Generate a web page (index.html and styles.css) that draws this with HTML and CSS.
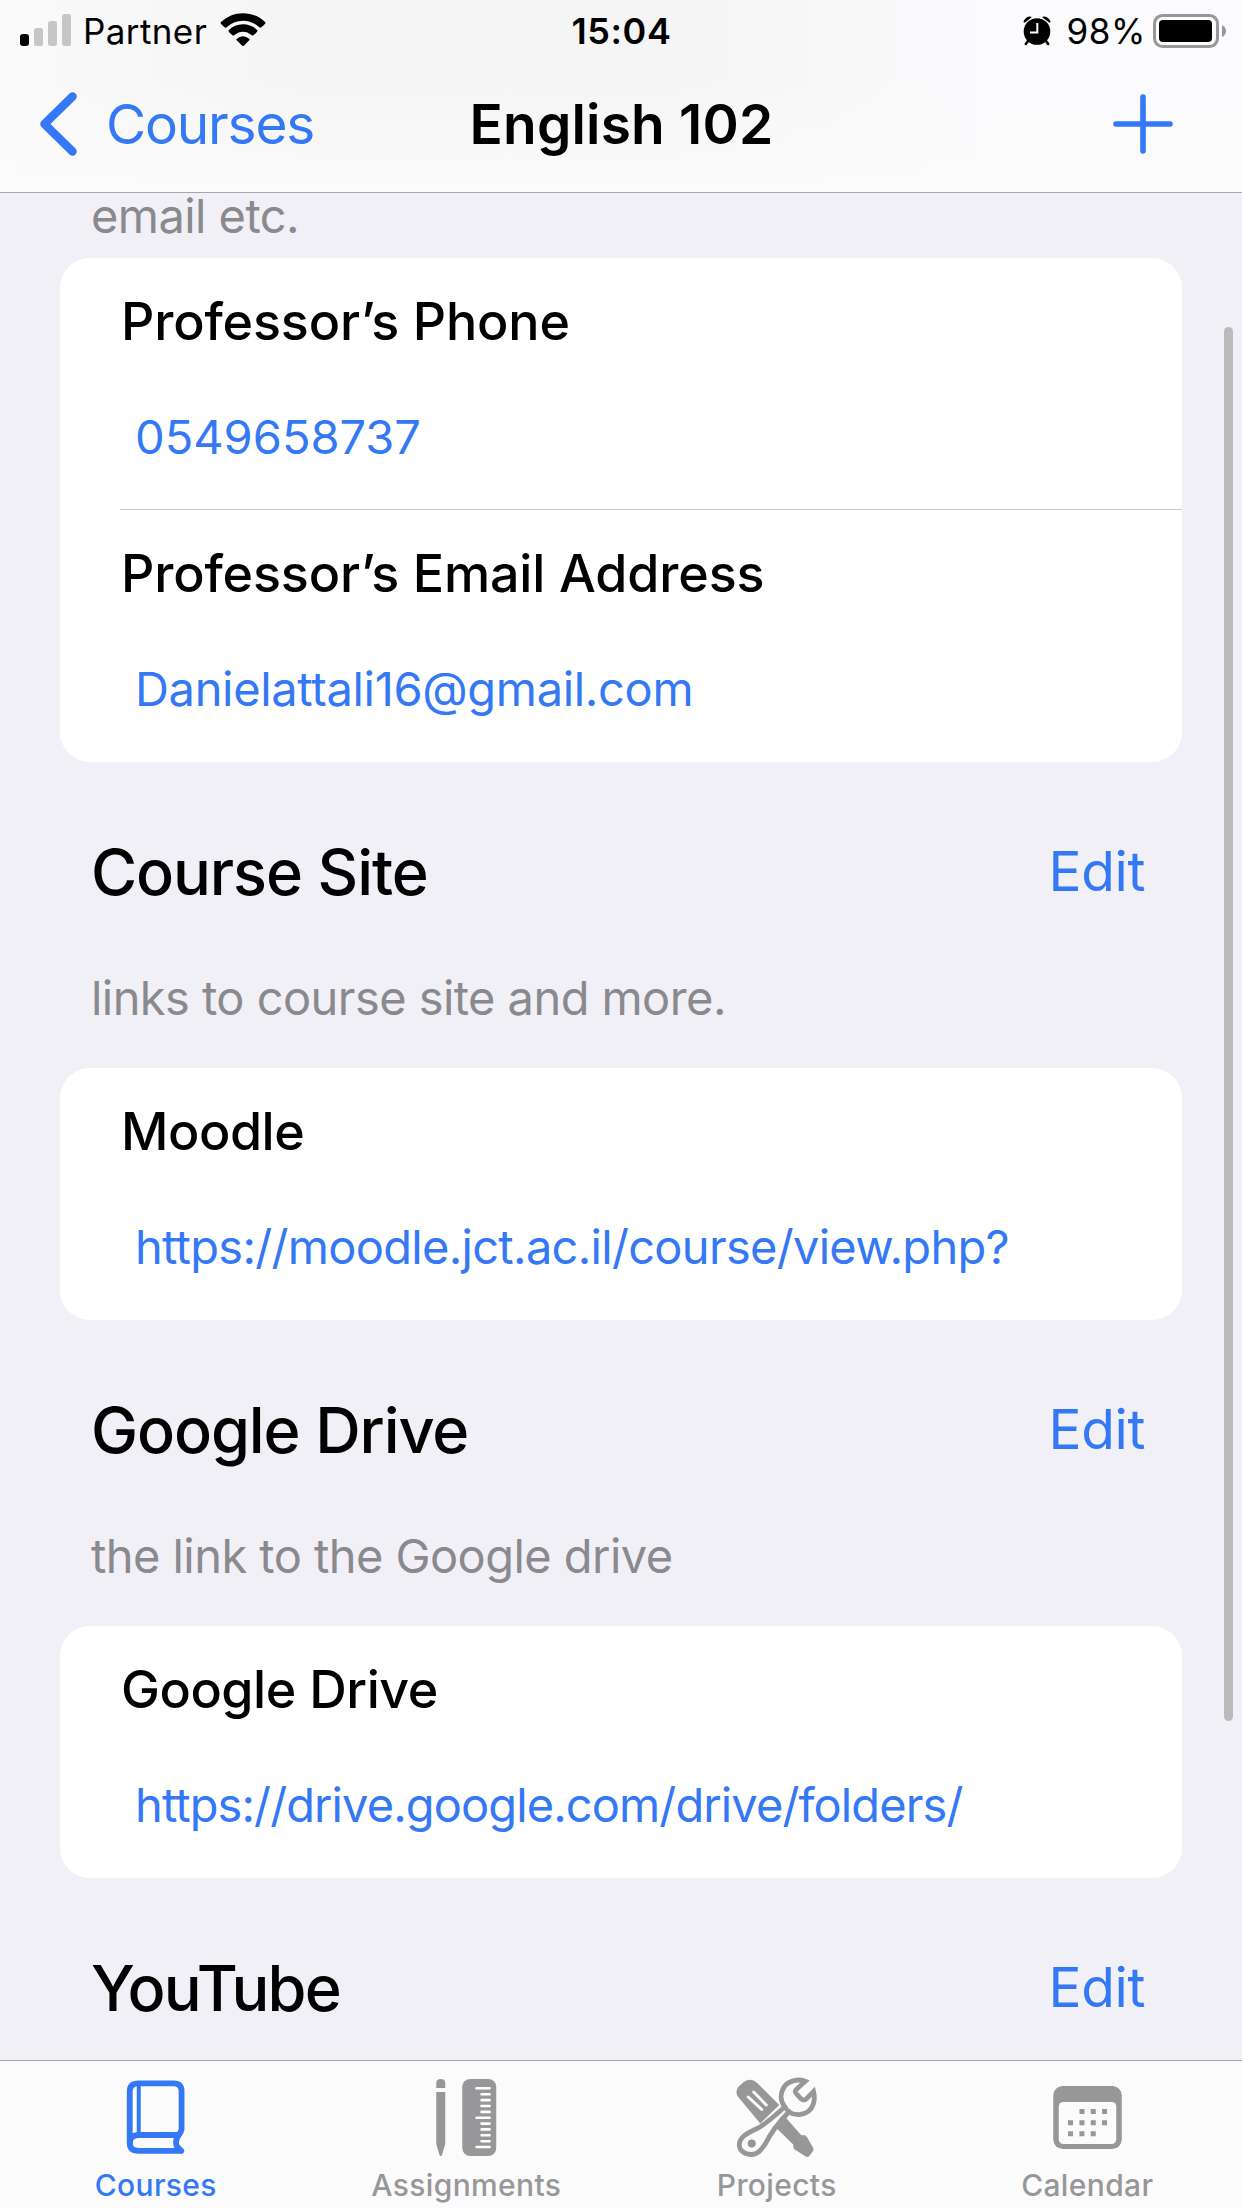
FILE: index.html
```html
<!DOCTYPE html>
<html lang="en">
<head>
<meta charset="utf-8">
<title>English 102</title>
<link rel="stylesheet" href="styles.css">
</head>
<body>
<div class="screen">
  <header class="top">
    <div class="status">
      <div class="status-left">
        <svg class="signal" width="51" height="32" viewBox="0 0 51 32"><rect y="20" width="9" height="12" rx="3"/><g fill="#c6c6c7"><rect x="14" y="14" width="9" height="18" rx="2.5"/><rect x="28" y="7" width="9" height="25" rx="2.5"/><rect x="42" width="9" height="32" rx="2.5"/></g></svg>
        <span class="carrier">Partner</span>
        <svg class="wifi" width="46" height="34" viewBox="0 0 46 34"><path d="M.5 9.500C13-3 33-3 45.500 9.500Q45.500 11 41 14.500Q40 15 39 14C30 5.500 16 5.500 7 14Q6 15 5 14.500Q.5 11 .5 9.500ZM8.400 17.500C16 9.300 30 9.300 37.600 17.500Q37.500 19 33.500 22.300Q32.500 23 31.500 22C26.500 17.500 19.500 17.500 14.500 22Q13.500 23 12.500 22.300Q8.500 19 8.400 17.500ZM16.500 26Q23 20.500 29.500 26Q30 27 28.500 28L24 32.500Q23 33.500 22 32.500L17.500 28Q16 27 16.500 26Z"/></svg>
      </div>
      <span class="clock">15:04</span>
      <div class="status-right">
        <svg class="alarm" width="28" height="30" viewBox="0 0 28 30"><circle cx="14" cy="15.5" r="13.3"/><path d="M.8 6.500Q0 4.500 2.500 2.500Q5-.5 8.300.8L8.500 1.500 2 6.500ZM27.200 6.500Q28 4.500 25.500 2.500Q23-.5 19.700.8L19.500 1.500 26 6.500Z"/><path d="M5 25 2.800 28M23 25 25.200 28" stroke="#000" stroke-width="2.500" stroke-linecap="round"/><path d="M14.300 7V16.500H7" fill="none" stroke="#fbfbfd" stroke-width="2"/></svg>
        <span class="percent">98%</span>
        <svg class="battery" width="74" height="34" viewBox="0 0 74 34"><rect x="1.500" y="1.500" width="63" height="31" rx="8" fill="none" stroke="#979799" stroke-width="3"/><rect x="6" y="6" width="53" height="22" rx="4"/><path d="M69 11Q73 13 73 17T69 23Z" fill="#979799"/></svg>
      </div>
    </div>
    <nav class="nav">
      <a class="back"><svg width="38" height="64" viewBox="0 0 38 64"><path d="M33.500 4.500 5.500 32 33.500 59.500" fill="none" stroke="#3478f6" stroke-width="8.500" stroke-linecap="round" stroke-linejoin="round"/></svg><span>Courses</span></a>
      <h1 class="title">English 102</h1>
      <a class="add"><svg width="60" height="60" viewBox="0 0 60 60"><path d="M30 3V57M3 30H57" stroke="#3478f6" stroke-width="5.600" stroke-linecap="round"/></svg></a>
    </nav>
  </header>

  <main class="content">
    <p class="note note-first">email etc.</p>
    <section class="card">
      <div class="row"><h3 class="label">Professor’s Phone</h3><a class="link phone">0549658737</a></div>
      <div class="row"><h3 class="label">Professor’s Email Address</h3><a class="link email">Danielattali16@gmail.com</a></div>
    </section>
    <div class="head"><h2 class="heading">Course Site</h2><a class="edit">Edit</a></div>
    <p class="note">links to course site and more.</p>
    <section class="card">
      <div class="row"><h3 class="label tight">Moodle</h3><a class="link site">https://moodle.jct.ac.il/course/view.php?</a></div>
    </section>
    <div class="head"><h2 class="heading">Google Drive</h2><a class="edit">Edit</a></div>
    <p class="note">the link to the Google drive</p>
    <section class="card">
      <div class="row"><h3 class="label tight">Google Drive</h3><a class="link drive">https://drive.google.com/drive/folders/</a></div>
    </section>
    <div class="head"><h2 class="heading video">YouTube</h2><a class="edit">Edit</a></div>
    <div class="scrollbar"></div>
  </main>

  <footer class="tabs">
    <a class="tab active">
      <svg width="100" height="100" viewBox="-4.75 0 100 100"><g fill="none" stroke="#3478f6" stroke-width="5.800" stroke-linejoin="round" stroke-linecap="round"><path d="M71.500 84.800H28.500Q20 84.800 20 77V25.500Q20 17.300 28.500 17.300H64Q71.800 17.300 71.800 25V63.500Q71.500 65.500 69 69Q66.300 72 66.300 76.500Q66.300 80 68.500 82L71.500 84.800"/><path d="M68.500 69H28Q20 69.500 20 77"/><path d="M29 19V67" stroke-width="4" stroke-linecap="butt"/></g></svg>
      <span>Courses</span></a>
    <a class="tab">
      <svg width="100" height="100" viewBox="-4.25 0 100 100" fill="#979799"><path d="M16 22V17Q16 13 20.500 13T25 17V22ZM16 26H25V78L21.800 89Q20.500 91 19.200 89L16 78Z"/><rect x="42" y="13" width="34" height="77" rx="8"/><g stroke="#fff" stroke-width="2.600" stroke-linecap="round"><path d="M56.300 22.300H69.300M56.300 51.700H69.300M56.300 81H69.300"/><path d="M61.300 28.200H69.300M61.300 34.100H69.300M61.300 40H69.300M61.300 45.900H69.300M61.300 57.600H69.300M61.300 63.400H69.300M61.300 69.300H69.300M61.300 75.200H69.300"/></g></svg>
      <span>Assignments</span></a>
    <a class="tab">
      <svg width="100" height="100" viewBox="0.75 0 100 100" fill="#979799"><path d="M13 31Q9 25.500 13.500 20.500L18.500 16Q25.500 11 32 17L54 39 35 57.500ZM50 61 60 51 76 69.300H79.500Q81 69.500 82 71.500L88 82Q88.500 84 87.500 85.500L84 90Q82.500 91.500 80.500 90.500L69.500 83.500Q68 82.500 68 80.500V78.500Z"/><path d="M23 31 36.500 43.500M28.500 26 41 39" stroke="#fbfbfc" stroke-width="3" stroke-linecap="round"/><path d="M80 15.300C73 12.500 64 14.500 59.500 20C54.500 27 55 35 59.500 41C50 49 42 57 33 62C22 67 14 71 14 79C14 84 19 88.500 26 88.500C33 88.500 36.500 83 40 78C43.500 71 49 61 63.500 46C70 50 78 49.500 83.500 45C89 40 90 33 88.300 25.500L81 33Q78.500 35 76 33L71 27.500Q69 25 71 23.500Z" fill="#fbfbfc" stroke="#979799" stroke-width="4.800"/><path d="M59 40Q61 44 65 46.500" fill="none" stroke="#979799" stroke-width="4.500"/><circle cx="26.500" cy="77.500" r="4"/></svg>
      <span>Projects</span></a>
    <a class="tab">
      <svg width="100" height="100" viewBox="-3.25 0 100 100" fill="#979799"><rect x="13" y="20" width="68.500" height="63" rx="9.500"/><rect x="18.500" y="36" width="57.500" height="42" rx="4.500" fill="#fbfbfc"/><path d="M39.200 45.500h5M50.500 45.500h5M61.800 45.500h5M27.800 56.700h5M39.200 56.700h5M50.500 56.700h5M61.800 56.700h5M27.800 67.800h5M39.200 67.800h5M50.500 67.800h5" stroke="#979799" stroke-width="5"/></svg>
      <span>Calendar</span></a>
  </footer>
</div>
</body>
</html>
```
FILE: styles.css
```css
* { box-sizing: border-box; margin: 0; padding: 0; }
body { background: #f1f0f6; color: #000; font-family: Inter, "Liberation Sans", sans-serif; }
svg { display: block; flex: none; }
.screen { width: 1242px; height: 2208px; display: flex; flex-direction: column; overflow: hidden; }
.top { height: 193px; flex: none; border-bottom: 1px solid #a7a6ab; background: linear-gradient(180deg, rgba(251, 251, 252, 0) 40%, #fbfbfc 100%), linear-gradient(90deg, #fafafb 0, #f5f5f6 24%, #f5f5f6 55%, #fbfbfd 80%); }
.status { height: 62px; display: grid; grid-template-columns: 1fr auto 1fr; align-items: center; padding: 0 15px 0 20px; font-size: 35px; line-height: 62px; }
.status-left, .status-right { display: flex; align-items: center; }
.status-left { margin-top: -2px; }
.status-left span { position: relative; top: 1px; }
.status-right { justify-content: flex-end; }
.carrier { margin: 0 13px 0 12px; letter-spacing: 0.4px; }
.clock { font-weight: 600; font-size: 36px; letter-spacing: 0.6px; margin-right: 4px; }
.percent { margin: 0 7px 0 15px; letter-spacing: 0.6px; }
.nav { height: 130px; display: grid; grid-template-columns: 1fr auto 1fr; align-items: center; padding: 0 39px 6px; }
.back { display: flex; align-items: center; gap: 29px; color: #3478f6; font-size: 55px; letter-spacing: -1.2px; }
.title { font-size: 55px; font-weight: 600; letter-spacing: 0.2px; padding-left: 1px; }
.add { justify-self: end; margin-right: 30px; }
.content { position: relative; flex: none; height: 1867px; overflow: hidden; padding: 0 60px; }
.note { height: 109px; padding-left: 31px; font-size: 47px; line-height: 78px; letter-spacing: -0.56px; color: #8a8a8e; }
.note-first { height: 65px; line-height: 46px; }
.card { background: #fff; border-radius: 30px; padding-left: 60px; }
.row { height: 252px; padding-top: 32px; }
.row:not(:last-child) { border-bottom: 1px solid #c6c6c8; }
.label { padding-left: 1px; font-size: 52px; font-weight: 500; line-height: 63px; letter-spacing: -0.15px; }
.tight { letter-spacing: -0.45px; }
.link { display: block; margin: 55px 0 0 15px; font-size: 47px; line-height: 57px; color: #3478f6; }
.email { letter-spacing: -0.33px; }
.site { letter-spacing: -0.7px; }
.drive { letter-spacing: -0.9px; }
.head { height: 197px; display: flex; justify-content: space-between; padding: 72px 37px 0 31px; line-height: 76px; }
.heading { font-size: 63px; font-weight: 500; letter-spacing: -1.1px; }
.video { letter-spacing: -1.8px; }
.edit { font-size: 55px; line-height: 74px; letter-spacing: -0.4px; color: #3478f6; }
.scrollbar { position: absolute; left: 1224px; top: 134px; width: 9px; height: 1394px; border-radius: 5px; background: #bbbbbc; }
.tabs { flex: none; height: 148px; border-top: 1px solid #a7a6ab; background: #fbfbfc; display: grid; grid-template-columns: repeat(4, 1fr); }
.tab { display: flex; flex-direction: column; align-items: center; color: #979799; font-size: 30px; font-weight: 500; line-height: 38px; letter-spacing: 0.35px; padding-top: 5px; }
.tab span { padding-left: 1px; }
.active { color: #3478f6; }
```
